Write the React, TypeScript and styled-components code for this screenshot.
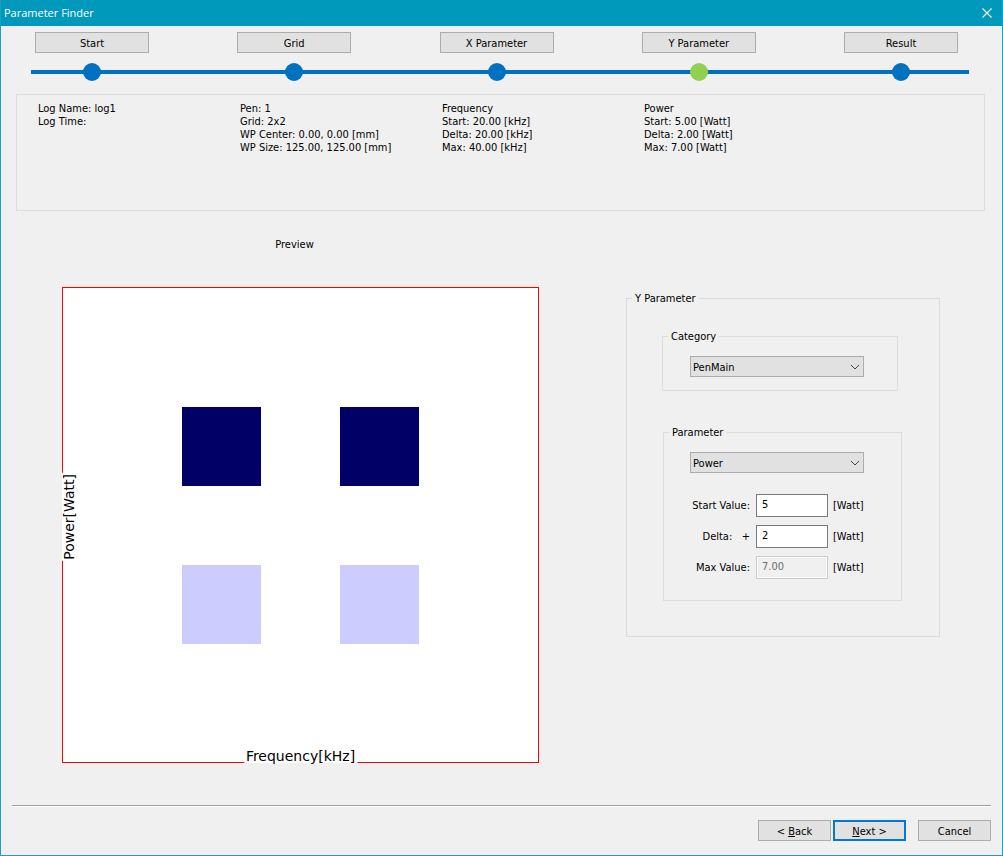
import React, { useState } from "react";
import styled, { createGlobalStyle, css } from "styled-components";

const colors = {
  title: "#0099bc",
  frame: "#1a9fbf",
  face: "#f0f0f0",
  button: "#e1e1e1",
  buttonEdge: "#adadad",
  group: "#dcdcdc",
  track: "#0070c0",
  active: "#92d050",
  focus: "#0078d7",
};

const GlobalStyle = createGlobalStyle`
  *, *::before, *::after { box-sizing: border-box; }
  body {
    margin: 0;
    background: ${colors.face};
    color: #000;
    font: 11px/13px Tahoma, "DejaVu Sans Condensed", sans-serif;
  }
  button, input, select { font: inherit; color: inherit; }
`;

const Dialog = styled.div`
  display: flex;
  flex-direction: column;
  min-height: 100vh;
  border: 1px solid ${colors.frame};
  border-top: 0;
`;

const TitleBar = styled.header`
  display: flex;
  align-items: center;
  justify-content: space-between;
  height: 26px;
  padding: 0 9px 0 3px;
  background: ${colors.title};
  color: #fff;
`;

const Title = styled.h1`
  margin: 0;
  font: 11px/16px "Segoe UI", "Open Sans", sans-serif;
`;

const CloseButton = styled.button`
  display: flex;
  padding: 0;
  border: 0;
  background: none;
`;

const Button = styled.button<{ $default?: boolean }>`
  height: 21px;
  padding: 2px 0 0;
  border: 1px solid ${colors.buttonEdge};
  background: ${colors.button};
  ${(p) =>
    p.$default &&
    css`
      border: 2px solid ${colors.focus};
    `}
`;

const Steps = styled.nav`
  display: flex;
  justify-content: space-between;
  padding: 6px 44px 0 34px;
`;

const StepButton = styled(Button)`
  width: 114px;
`;

const Track = styled.div`
  display: flex;
  justify-content: space-between;
  margin: 10px 33px 0 30px;
  padding: 0 59px 0 52px;
  background: linear-gradient(${colors.track}, ${colors.track}) center / 100% 4px no-repeat;
`;

const Dot = styled.span<{ $active: boolean }>`
  width: 18px;
  height: 18px;
  border-radius: 50%;
  background: ${(p) => (p.$active ? colors.active : colors.track)};
`;

const Summary = styled.section`
  display: grid;
  grid-template-columns: repeat(4, 1fr) 138px;
  min-height: 117px;
  margin: 13px 17px 0 15px;
  padding: 7px 0 0 21px;
  border: 1px solid ${colors.group};
`;

const SummaryColumn = styled.div`
  white-space: nowrap;
`;

const Main = styled.main`
  display: grid;
  grid-template-columns: 1fr 314px;
  gap: 87px;
  align-items: start;
  padding: 27px 62px 0 61px;
`;

const Preview = styled.section`
  display: flex;
  flex-direction: column;
  gap: 36px;
`;

const PreviewTitle = styled.h2`
  margin: 0 12px 0 0;
  font: inherit;
  text-align: center;
`;

const Plot = styled.div`
  position: relative;
  display: grid;
  grid-template: repeat(12, 1fr) / repeat(12, 1fr);
  aspect-ratio: 477 / 476;
  border: 1px solid #f00;
  background: #fff;
`;

const Cell = styled.div<{ $column: number; $row: number; $color: string }>`
  grid-column: ${(p) => p.$column} / span 2;
  grid-row: ${(p) => p.$row} / span 2;
  background: ${(p) => p.$color};
`;

const AxisLabel = styled.span`
  position: absolute;
  background: #fff;
  font: 14px/14px Verdana, "DejaVu Sans", sans-serif;
  white-space: nowrap;
`;

const XLabel = styled(AxisLabel)`
  bottom: -1px;
  left: 50%;
  padding: 1px 2px 0;
  transform: translateX(-50%);
`;

const YLabel = styled(AxisLabel)`
  top: 39%;
  left: -1px;
  padding: 1px 0;
  writing-mode: vertical-rl;
  transform: rotate(180deg);
`;

const Group = styled.fieldset`
  min-width: 0;
  margin: 0;
  padding: 0;
  border: 1px solid ${colors.group};
`;

const Legend = styled.legend`
  margin-left: 5px;
  padding: 0 3px;
`;

const ParameterGroup = styled(Group)`
  height: 345px;
  margin-top: 54px;
`;

const ParameterBody = styled.div`
  display: flex;
  flex-direction: column;
  gap: 35px;
  padding: 25px 37px 0 35px;
`;

const CategoryGroup = styled(Group)`
  height: 61px;
  margin-right: 4px;
`;

const ValueGroup = styled(Group)`
  height: 175px;
  margin-left: 1px;
`;

const GroupBody = styled.div<{ $indent: number }>`
  padding: 13px 0 0 ${(p) => p.$indent}px;
`;

const SelectBox = styled.div`
  position: relative;
  width: 174px;
`;

const Select = styled.select`
  display: block;
  width: 100%;
  height: 21px;
  padding: 1px 20px 0 2px;
  border: 1px solid ${colors.buttonEdge};
  border-radius: 0;
  background: ${colors.button};
  appearance: none;
`;

const Chevron = styled.svg`
  position: absolute;
  top: 8px;
  right: 4px;
  pointer-events: none;
`;

const Fields = styled.div`
  display: grid;
  grid-template-columns: 61px 72px auto;
  justify-content: start;
  align-items: center;
  gap: 8px 5px;
  margin-top: 21px;
`;

const FieldLabel = styled.label`
  padding-right: 1px;
  text-align: right;
  white-space: pre;
`;

const TextBox = styled.input`
  width: 72px;
  height: 23px;
  padding: 0 5px 2px;
  border: 1px solid #7a7a7a;
  background: #fff;

  &:disabled {
    border-color: #ccc;
    background: ${colors.face};
    color: #6d6d6d;
    box-shadow: inset 0 0 0 1px #fff;
  }
`;

const Footer = styled.footer`
  display: flex;
  justify-content: flex-end;
  margin: auto 11px 0;
  padding: 14px 0;
  border-top: 1px solid #a0a0a0;
  box-shadow: inset 0 1px #fff;
`;

const FooterButton = styled(Button)`
  width: 73px;
  margin-left: 2px;

  &:last-child {
    margin-left: 12px;
  }
`;

const steps = ["Start", "Grid", "X Parameter", "Y Parameter", "Result"];

const summary = [
  ["Log Name: log1", "Log Time:"],
  ["Pen: 1", "Grid: 2x2", "WP Center: 0.00, 0.00 [mm]", "WP Size: 125.00, 125.00 [mm]"],
  ["Frequency", "Start: 20.00 [kHz]", "Delta: 20.00 [kHz]", "Max: 40.00 [kHz]"],
  ["Power", "Start: 5.00 [Watt]", "Delta: 2.00 [Watt]", "Max: 7.00 [Watt]"],
];

const cells = [
  { column: 4, row: 4, color: "#000066" },
  { column: 8, row: 4, color: "#000066" },
  { column: 4, row: 8, color: "#ccccff" },
  { column: 8, row: 8, color: "#ccccff" },
];

function DropDown({ label, options }: { label: string; options: string[] }) {
  return (
    <SelectBox>
      <Select aria-label={label}>
        {options.map((option) => (
          <option key={option}>{option}</option>
        ))}
      </Select>
      <Chevron width="10" height="6" viewBox="0 0 10 6" fill="none" stroke="#444" aria-hidden="true">
        <path d="M1 1l4 4 4-4" />
      </Chevron>
    </SelectBox>
  );
}

export default function App() {
  const [start, setStart] = useState("5");
  const [delta, setDelta] = useState("2");
  const max = (Number(start) + Number(delta)).toFixed(2);

  return (
    <>
      <GlobalStyle />
      <Dialog>
        <TitleBar>
          <Title>Parameter Finder</Title>
          <CloseButton type="button" aria-label="Close">
            <svg width="12" height="12" viewBox="0 0 12 12" stroke="#fff" strokeWidth="1.1" aria-hidden="true">
              <path d="M1.5 1.5l9 9M10.5 1.5l-9 9" />
            </svg>
          </CloseButton>
        </TitleBar>

        <Steps aria-label="Steps">
          {steps.map((step) => (
            <StepButton key={step} type="button">
              {step}
            </StepButton>
          ))}
        </Steps>
        <Track>
          {steps.map((step) => (
            <Dot key={step} $active={step === "Y Parameter"} />
          ))}
        </Track>

        <Summary>
          {summary.map((lines) => (
            <SummaryColumn key={lines[0]}>
              {lines.map((line) => (
                <div key={line}>{line}</div>
              ))}
            </SummaryColumn>
          ))}
        </Summary>

        <Main>
          <Preview>
            <PreviewTitle>Preview</PreviewTitle>
            <Plot>
              {cells.map((cell) => (
                <Cell
                  key={`${cell.column}-${cell.row}`}
                  $column={cell.column}
                  $row={cell.row}
                  $color={cell.color}
                />
              ))}
              <XLabel>Frequency[kHz]</XLabel>
              <YLabel>Power[Watt]</YLabel>
            </Plot>
          </Preview>

          <ParameterGroup>
            <Legend>Y Parameter</Legend>
            <ParameterBody>
              <CategoryGroup>
                <Legend>Category</Legend>
                <GroupBody $indent={27}>
                  <DropDown label="Category" options={["PenMain"]} />
                </GroupBody>
              </CategoryGroup>
              <ValueGroup>
                <Legend>Parameter</Legend>
                <GroupBody $indent={26}>
                  <DropDown label="Parameter" options={["Power", "Frequency"]} />
                  <Fields>
                    <FieldLabel htmlFor="start">Start Value:</FieldLabel>
                    <TextBox id="start" value={start} onChange={(e) => setStart(e.target.value)} />
                    <span>[Watt]</span>
                    <FieldLabel htmlFor="delta">{"Delta:   +"}</FieldLabel>
                    <TextBox id="delta" value={delta} onChange={(e) => setDelta(e.target.value)} />
                    <span>[Watt]</span>
                    <FieldLabel htmlFor="max">Max Value:</FieldLabel>
                    <TextBox id="max" value={max} disabled readOnly />
                    <span>[Watt]</span>
                  </Fields>
                </GroupBody>
              </ValueGroup>
            </ParameterBody>
          </ParameterGroup>
        </Main>

        <Footer>
          <FooterButton type="button">
            &lt; <u>B</u>ack
          </FooterButton>
          <FooterButton type="button" $default>
            <u>N</u>ext &gt;
          </FooterButton>
          <FooterButton type="button">Cancel</FooterButton>
        </Footer>
      </Dialog>
    </>
  );
}
